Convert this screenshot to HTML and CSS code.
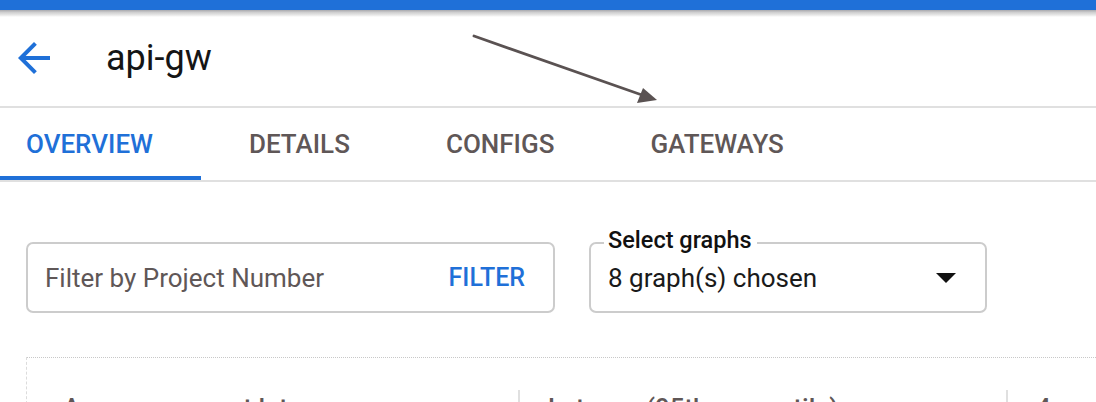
FILE: index.html
```html
<!DOCTYPE html>
<html lang="en">
<head>
<meta charset="utf-8">
<title>api-gw</title>
<link rel="stylesheet" href="styles.css">
</head>
<body>
<div class="page">
  <div class="topbar"></div>
  <div class="topshadow"></div>
  <header class="header">
    <svg class="back" viewBox="0 0 24 24" width="48" height="48" aria-hidden="true">
      <path d="M20 11H7.83l5.59-5.59L12 4l-8 8 8 8 1.41-1.41L7.83 13H20v-2z"/>
    </svg>
    <h1 class="title">api-gw</h1>
  </header>
  <nav class="tabs">
    <div class="tab tab-active">OVERVIEW</div>
    <div class="tab">DETAILS</div>
    <div class="tab">CONFIGS</div>
    <div class="tab">GATEWAYS</div>
  </nav>
  <section class="controls">
    <div class="filter-box">
      <span class="filter-placeholder">Filter by Project Number</span>
      <span class="filter-btn">FILTER</span>
    </div>
    <div class="select-box">
      <span class="select-label">Select graphs</span>
      <span class="select-value">8 graph(s) chosen</span>
      <span class="select-caret"></span>
    </div>
  </section>
  <section class="card">
    <div class="card-row">
      <div class="col col-first">Average request latency</div>
      <div class="col">Latency (95th percentile)</div>
      <div class="col">4xx errors</div>
    </div>
  </section>
  <svg class="annotation" width="1096" height="402" viewBox="0 0 1096 402" aria-hidden="true">
    <line x1="474" y1="36" x2="642" y2="95" stroke="#5a5252" stroke-width="2.8" stroke-linecap="round"/>
    <polygon points="657,100 637,103 643,88" fill="#5a5252"/>
  </svg>
</div>
</body>
</html>
```

FILE: styles.css
```css
html, body {
  margin: 0;
  padding: 0;
  background: #ffffff;
}

body {
  font-family: Roboto, "Liberation Sans", Arial, sans-serif;
  width: 1096px;
  height: 402px;
  overflow: hidden;
}

.page {
  position: relative;
  width: 1096px;
  height: 402px;
  overflow: hidden;
}

.topbar {
  height: 10px;
  background: #1f70d8;
}

.topshadow {
  height: 7px;
  background: linear-gradient(to bottom, #a8a9ad 0%, #cfcfd0 35%, #e6e6e6 70%, #ffffff 100%);
}

.header {
  display: flex;
  align-items: flex-start;
  height: 89px;
  border-bottom: 2px solid #e0e0e0;
}

.back {
  fill: #1f70d8;
  margin: 17px 0 0 10px;
  flex: none;
}

.title {
  margin: 20px 0 0 48px;
  font-size: 36px;
  line-height: 42px;
  font-weight: 400;
  color: #151515;
}

.tabs {
  display: flex;
  height: 72px;
  margin-left: -22px;
  border-bottom: 2px solid #e0e0e0;
}

.tab {
  display: flex;
  align-items: center;
  padding: 4px 48px 0;
  font-size: 26px;
  font-weight: 500;
  color: #5f5757;
  box-sizing: border-box;
  border-bottom: 4px solid transparent;
}

.tab-active {
  color: #1f70d8;
  border-bottom-color: #1f70d8;
}

.controls {
  display: flex;
  gap: 34px;
  margin: 60px 0 0 26px;
}

.filter-box {
  box-sizing: border-box;
  width: 529px;
  height: 71px;
  border: 2px solid #cccccc;
  border-radius: 7px;
  display: flex;
  align-items: center;
  justify-content: space-between;
  padding: 0 28px 0 17px;
}

.filter-placeholder {
  font-size: 26px;
  color: #5f5757;
}

.filter-btn {
  font-size: 25px;
  font-weight: 500;
  color: #1f70d8;
}

.select-box {
  position: relative;
  box-sizing: border-box;
  width: 398px;
  height: 71px;
  border: 2px solid #cccccc;
  border-radius: 7px;
  display: flex;
  align-items: center;
  justify-content: space-between;
  padding: 0 29px 0 17px;
}

.select-label {
  position: absolute;
  left: 13px;
  top: -18px;
  padding: 0 5px 0 4px;
  background: #ffffff;
  font-size: 23.5px;
  font-weight: 500;
  color: #111111;
  line-height: 28px;
}

.select-value {
  font-size: 26px;
  color: #1a1a1a;
}

.select-caret {
  width: 0;
  height: 0;
  border-left: 10px solid transparent;
  border-right: 10px solid transparent;
  border-top: 10px solid #111111;
}

.card {
  margin: 44px 0 0 26px;
  border-top: 1px dotted #c8c8c8;
  border-left: 1px dashed #dcdcdc;
  height: 100px;
  overflow: hidden;
}

.card-row {
  display: flex;
  padding-top: 32px;
}

.col {
  flex: none;
  box-sizing: border-box;
  width: 488px;
  padding: 3px 0 0 28px;
  font-size: 26px;
  font-weight: 500;
  color: #5f5757;
  white-space: nowrap;
  border-left: 2px solid #e0e0e0;
}

.col-first {
  width: 491px;
  padding-left: 36px;
  border-left: none;
}

.annotation {
  position: absolute;
  left: 0;
  top: 0;
  pointer-events: none;
}
```
